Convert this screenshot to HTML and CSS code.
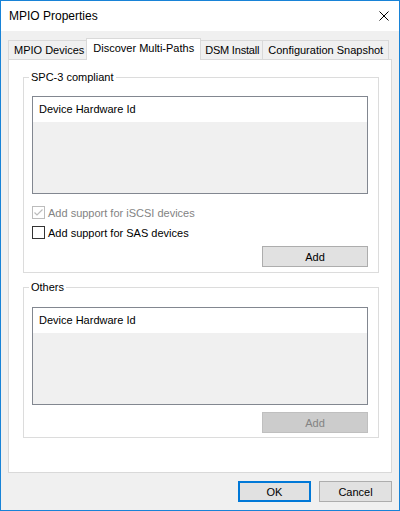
FILE: index.html
```html
<!DOCTYPE html>
<html>
<head>
<meta charset="utf-8">
<title>MPIO Properties</title>
<link rel="stylesheet" href="styles.css">
</head>
<body>
<div class="window">
  <div class="titlebar">
    <span class="title">MPIO Properties</span>
    <svg class="close" width="10" height="10" viewBox="0 0 10 10"><path d="M0.5 0.5 L9.5 9.5 M9.5 0.5 L0.5 9.5" stroke="#000" stroke-width="1" fill="none"/></svg>
  </div>
  <div class="body">
    <div class="tabs">
      <div class="tab">MPIO Devices</div>
      <div class="tab active">Discover Multi-Paths</div>
      <div class="tab narrow">DSM Install</div>
      <div class="tab">Configuration Snapshot</div>
    </div>
    <div class="panel">
      <fieldset class="group g1">
        <legend>SPC-3 compliant</legend>
        <div class="list"><div class="list-head">Device Hardware Id</div></div>
        <div class="cbrow first disabled"><span class="cb"><svg width="11" height="11" viewBox="0 0 11 11"><path d="M1.5 5.5 L4 8 L9.5 2.5" stroke="#bcbcbc" stroke-width="1.2" fill="none"/></svg></span><span>Add support for iSCSI devices</span></div>
        <div class="cbrow"><span class="cb"></span><span>Add support for SAS devices</span></div>
        <div class="btnrow"><button class="btn add">Add</button></div>
      </fieldset>
      <fieldset class="group g2">
        <legend>Others</legend>
        <div class="list"><div class="list-head">Device Hardware Id</div></div>
        <div class="btnrow"><button class="btn add" disabled>Add</button></div>
      </fieldset>
    </div>
    <div class="footer">
      <button class="btn dlg default">OK</button>
      <button class="btn dlg">Cancel</button>
    </div>
  </div>
</div>
</body>
</html>
```
FILE: styles.css
```css
html, body {
  margin: 0;
  padding: 0;
}
body {
  width: 400px;
  height: 511px;
  font-family: "Liberation Sans", Arial, sans-serif;
  font-size: 11px;
  color: #000;
  background: #f0f0f0;
}
.window {
  box-sizing: border-box;
  width: 400px;
  height: 511px;
  border: 1px solid #1883d7;
  background: #f0f0f0;
  display: flex;
  flex-direction: column;
}
.titlebar {
  height: 30px;
  background: #fff;
  display: flex;
  align-items: center;
  justify-content: space-between;
  padding: 0 10px 0 8px;
  font-size: 12px;
}
.close {
  display: block;
}
.body {
  padding: 7px 7px 0 7px;
  display: flex;
  flex-direction: column;
}
.tabs {
  display: flex;
  align-items: flex-end;
  height: 21px;
}
.tab {
  box-sizing: border-box;
  height: 19px;
  border: 1px solid #d9d9d9;
  border-bottom: 0;
  background: #f0f0f0;
  padding: 0 5px;
  line-height: 18px;
  margin-right: -1px;
  white-space: nowrap;
}
.tab.narrow {
  padding: 0 3px 0 4px;
  letter-spacing: -0.2px;
}
.tab.active {
  height: 22px;
  background: #fff;
  margin: 0 -1px -1px -3px;
  padding: 0 6px;
  line-height: 19px;
  position: relative;
  z-index: 1;
}
.panel {
  box-sizing: border-box;
  height: 414px;
  border: 1px solid #d9d9d9;
  background: #fff;
  padding: 10px 12px 0 14px;
  display: flex;
  flex-direction: column;
}
.group {
  margin: 0;
  border: 1px solid #dcdcdc;
  padding: 11px 10px 5px 8px;
  min-width: 0;
}
.group legend {
  padding: 0 2px;
  margin-left: -3px;
  line-height: 15px;
}
.g2 {
  margin-top: 7px;
  padding-top: 12px;
  padding-bottom: 4px;
}
.list {
  box-sizing: border-box;
  height: 98px;
  border: 1px solid #828790;
  background: #f0f0f0;
}
.list-head {
  height: 25px;
  background: #fff;
  padding-left: 6px;
  line-height: 25px;
}
.cbrow {
  display: flex;
  align-items: center;
  height: 13px;
  gap: 3px;
  margin-top: 7px;
}
.cbrow.first {
  margin-top: 12px;
}
.cb {
  box-sizing: border-box;
  width: 13px;
  height: 13px;
  border: 1px solid #333;
  background: #fff;
  display: flex;
  align-items: center;
  justify-content: center;
}
.cb svg {
  display: block;
}
.disabled {
  color: #838383;
}
.disabled .cb {
  border-color: #bcbcbc;
}
.btnrow {
  display: flex;
  justify-content: flex-end;
  margin-top: 7px;
}
.btn {
  box-sizing: border-box;
  height: 21px;
  border: 1px solid #adadad;
  background: #e1e1e1;
  font: inherit;
  color: #000;
  padding: 0;
  margin: 0;
}
.btn.add {
  width: 106px;
}
.btn:disabled {
  background: #cccccc;
  border-color: #bfbfbf;
  color: #838383;
}
.footer {
  display: flex;
  justify-content: flex-end;
  gap: 8px;
  margin-top: 8px;
}
.btn.dlg {
  width: 73px;
}
.btn.default {
  border: 2px solid #0078d7;
}
```
